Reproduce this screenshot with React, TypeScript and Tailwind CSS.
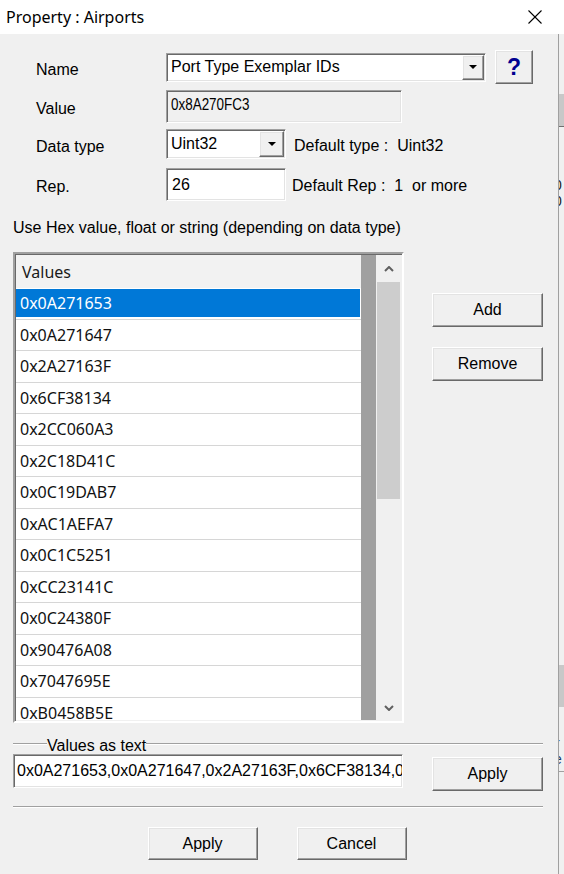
import React from "react";

const SUNKEN =
  "border border-t-[#a0a0a0] border-l-[#a0a0a0] border-b-white border-r-white shadow-[inset_1px_1px_0_#696969,inset_-1px_-1px_0_#e3e3e3]";
const RAISED =
  "border border-t-white border-l-white border-b-[#696969] border-r-[#696969] shadow-[inset_-1px_-1px_0_#a0a0a0,inset_1px_1px_0_#e3e3e3] bg-[#f0f0f0]";

const VALUES = [
  "0x0A271653",
  "0x0A271647",
  "0x2A27163F",
  "0x6CF38134",
  "0x2CC060A3",
  "0x2C18D41C",
  "0x0C19DAB7",
  "0xAC1AEFA7",
  "0x0C1C5251",
  "0xCC23141C",
  "0x0C24380F",
  "0x90476A08",
  "0x7047695E",
  "0xB0458B5E",
];

function DownTri() {
  return (
    <svg width="8" height="4" viewBox="0 0 8 4">
      <polygon points="0,0 8,0 4,4" fill="#000" />
    </svg>
  );
}

function Btn({ className, children }: { className: string; children: React.ReactNode }) {
  return <div className={`${RAISED} flex items-center justify-center ${className}`}>{children}</div>;
}

function Combo({ className, text, btn }: { className: string; text: string; btn: string }) {
  return (
    <div className={`${SUNKEN} bg-white flex items-stretch p-px ${className}`}>
      <div className="flex-1 pl-[3px] flex items-center whitespace-nowrap overflow-hidden">{text}</div>
      <div className={`${RAISED} ${btn} flex items-center justify-center`}>
        <DownTri />
      </div>
    </div>
  );
}

function Etched({ className }: { className: string }) {
  return <div className={`h-[2px] border-t border-t-[#a0a0a0] border-b border-b-white ${className}`} />;
}

function Chevron({ up }: { up: boolean }) {
  return (
    <svg width="10" height="6" viewBox="0 0 10 6">
      <polyline
        points={up ? "1,5 5,1 9,5" : "1,1 5,5 9,1"}
        fill="none"
        stroke="#606060"
        strokeWidth="2"
      />
    </svg>
  );
}

function Label({ children }: { children: React.ReactNode }) {
  return <div className="w-[166px] pl-[36px] pt-[5px]">{children}</div>;
}

export default function App() {
  return (
    <div className="w-[564px] h-[874px] overflow-hidden bg-[#f0f0f0] flex flex-col font-['Liberation_Sans',Arial,sans-serif] text-[16px] leading-[18px] text-black">
      {/* Title bar */}
      <div className="h-[34px] bg-white flex items-center shrink-0">
        <span className="pl-[6px] font-['Noto_Sans',sans-serif] text-[16px] text-black flex-1">Property : Airports</span>
        <svg width="14" height="14" viewBox="0 0 14 14" className="mr-[22px]">
          <line x1="0.5" y1="0.5" x2="13.5" y2="13.5" stroke="#000" strokeWidth="1.1" />
          <line x1="13.5" y1="0.5" x2="0.5" y2="13.5" stroke="#000" strokeWidth="1.1" />
        </svg>
      </div>

      <div className="flex flex-1 min-h-0">
        {/* Dialog body */}
        <div className="w-[558px] flex flex-col">
          {/* Form */}
          <div className="pt-[16px] flex flex-col">
            <div className="flex items-center h-[34px]">
              <Label>Name</Label>
              <Combo className="w-[320px] h-[29px]" text="Port Type Exemplar IDs" btn="w-[22px]" />
              <Btn className="ml-[9px] w-[38px] h-[34px]">
                <span className="font-bold text-[23px] leading-none text-[#000090]">?</span>
              </Btn>
            </div>
            <div className="flex items-center h-[33px] mt-[6px]">
              <Label>Value</Label>
              <div className={`${SUNKEN} w-[236px] h-[33px] bg-[#f0f0f0] flex items-center pl-[4px] pb-[3px] overflow-hidden`}>
                <span className="inline-block origin-left scale-x-[0.84] text-[16px] whitespace-nowrap">0x8A270FC3</span>
              </div>
            </div>
            <div className="flex items-center h-[30px] mt-[6px]">
              <Label>Data type</Label>
              <Combo className="w-[120px] h-[30px]" text="Uint32" btn="w-[25px]" />
              <div className="ml-[8px] pt-[3px] whitespace-pre">Default type :  Uint32</div>
            </div>
            <div className="flex items-center h-[33px] mt-[9px]">
              <Label>Rep.</Label>
              <div className={`${SUNKEN} w-[120px] h-[33px] bg-white flex items-center pl-[5px]`}>26</div>
              <div className="ml-[6px] pt-[2px] whitespace-pre">Default Rep :  1  or more</div>
            </div>
            <div className="mt-[18px] pl-[13px]">Use Hex value, float or string (depending on data type)</div>
          </div>

          {/* List + side buttons */}
          <div className="flex mt-[15px] pl-[13px]">
            <div className="w-[391px] h-[471px] border-2 border-t-[#a0a0a0] border-l-[#a0a0a0] border-b-white border-r-white shadow-[inset_1px_1px_0_#696969] p-px flex">
              <div className="flex-1 flex flex-col overflow-hidden bg-white font-['Noto_Sans',sans-serif] text-[16px]">
                <div className="h-[33px] shrink-0 bg-[#f2f2f2] flex items-center pl-[6px] text-[#1a1a1a]">Values</div>
                {VALUES.map((v, i) =>
                  i === 0 ? (
                    <div key={v} className="h-[31.5px] shrink-0 border-b border-b-[#d6d6d6] pt-px pr-px">
                      <div className="h-[28px] bg-[#0078d7] text-white flex items-center pl-[4px]">{v}</div>
                    </div>
                  ) : (
                    <div key={v} className="h-[31.5px] shrink-0 border-b border-b-[#d6d6d6] flex items-center pl-[4px] text-[#111]">
                      {v}
                    </div>
                  )
                )}
              </div>
              <div className="w-[15px] bg-[#a0a0a0]" />
              <div className="w-[25px] bg-[#f0f0f0] flex flex-col">
                <div className="h-[27px] flex items-center justify-center">
                  <Chevron up={true} />
                </div>
                <div className="h-[217px] mx-px bg-[#cdcdcd]" />
                <div className="flex-1" />
                <div className="h-[24px] flex items-center justify-center">
                  <Chevron up={false} />
                </div>
              </div>
            </div>
            <div className="ml-[28px] pt-[41px] flex flex-col">
              <Btn className="w-[111px] h-[34px]">Add</Btn>
              <Btn className="w-[111px] h-[34px] mt-[20px]">Remove</Btn>
            </div>
          </div>

          {/* Values as text group */}
          <div className="mt-[12px] flex items-center h-[18px] pl-[13px] pr-[15px]">
            <Etched className="w-[34px]" />
            <span className="pt-[3px]">Values as text</span>
            <Etched className="flex-1" />
          </div>
          <div className="flex pl-[13px] mt-px">
            <div className={`${SUNKEN} w-[390px] h-[34px] bg-white flex items-center pl-[3px] overflow-hidden whitespace-nowrap`}>
              <span>0x0A271653,0x0A271647,0x2A27163F,0x6CF38134,0</span>
            </div>
            <Btn className="ml-[29px] mt-[3px] w-[111px] h-[34px]">Apply</Btn>
          </div>
          <div className="pl-[13px] pr-[15px] mt-[15px]">
            <Etched className="w-full" />
          </div>
          <div className="flex justify-center gap-[39px] mt-[19px] pr-[4px]">
            <Btn className="w-[110px] h-[33px]">Apply</Btn>
            <Btn className="w-[110px] h-[33px]">Cancel</Btn>
          </div>
        </div>

        {/* Background window strip */}
        <div className="flex-1 border-l border-l-[#a0a0a0] bg-[#f0f0f0] flex flex-col overflow-hidden text-[14px] leading-[16px]">
          <div className="h-[60px]" />
          <div className="h-[32px] bg-[#c8c8c8]" />
          <div className="h-px bg-[#707070]" />
          <div className="mt-[4px] -ml-[4px] text-[#333]">/</div>
          <div className="mt-[30px] -ml-[5px] text-[#222]">0</div>
          <div className="-ml-[5px] text-[#222]">0</div>
          <div className="-ml-[5px] text-[#222]">(</div>
          <div className="-ml-[5px] text-[#222]">)</div>
          <div className="h-[424px]" />
          <div className="h-[42px] bg-[#c8c8c8]" />
          <div className="mt-[28px] -ml-[4px] text-[#1a3a6a]">r</div>
          <div className="-ml-[5px] text-[#1a3a6a]">e</div>
          <div className="mt-[4px] h-px bg-[#a0a0a0]" />
        </div>
      </div>
    </div>
  );
}
